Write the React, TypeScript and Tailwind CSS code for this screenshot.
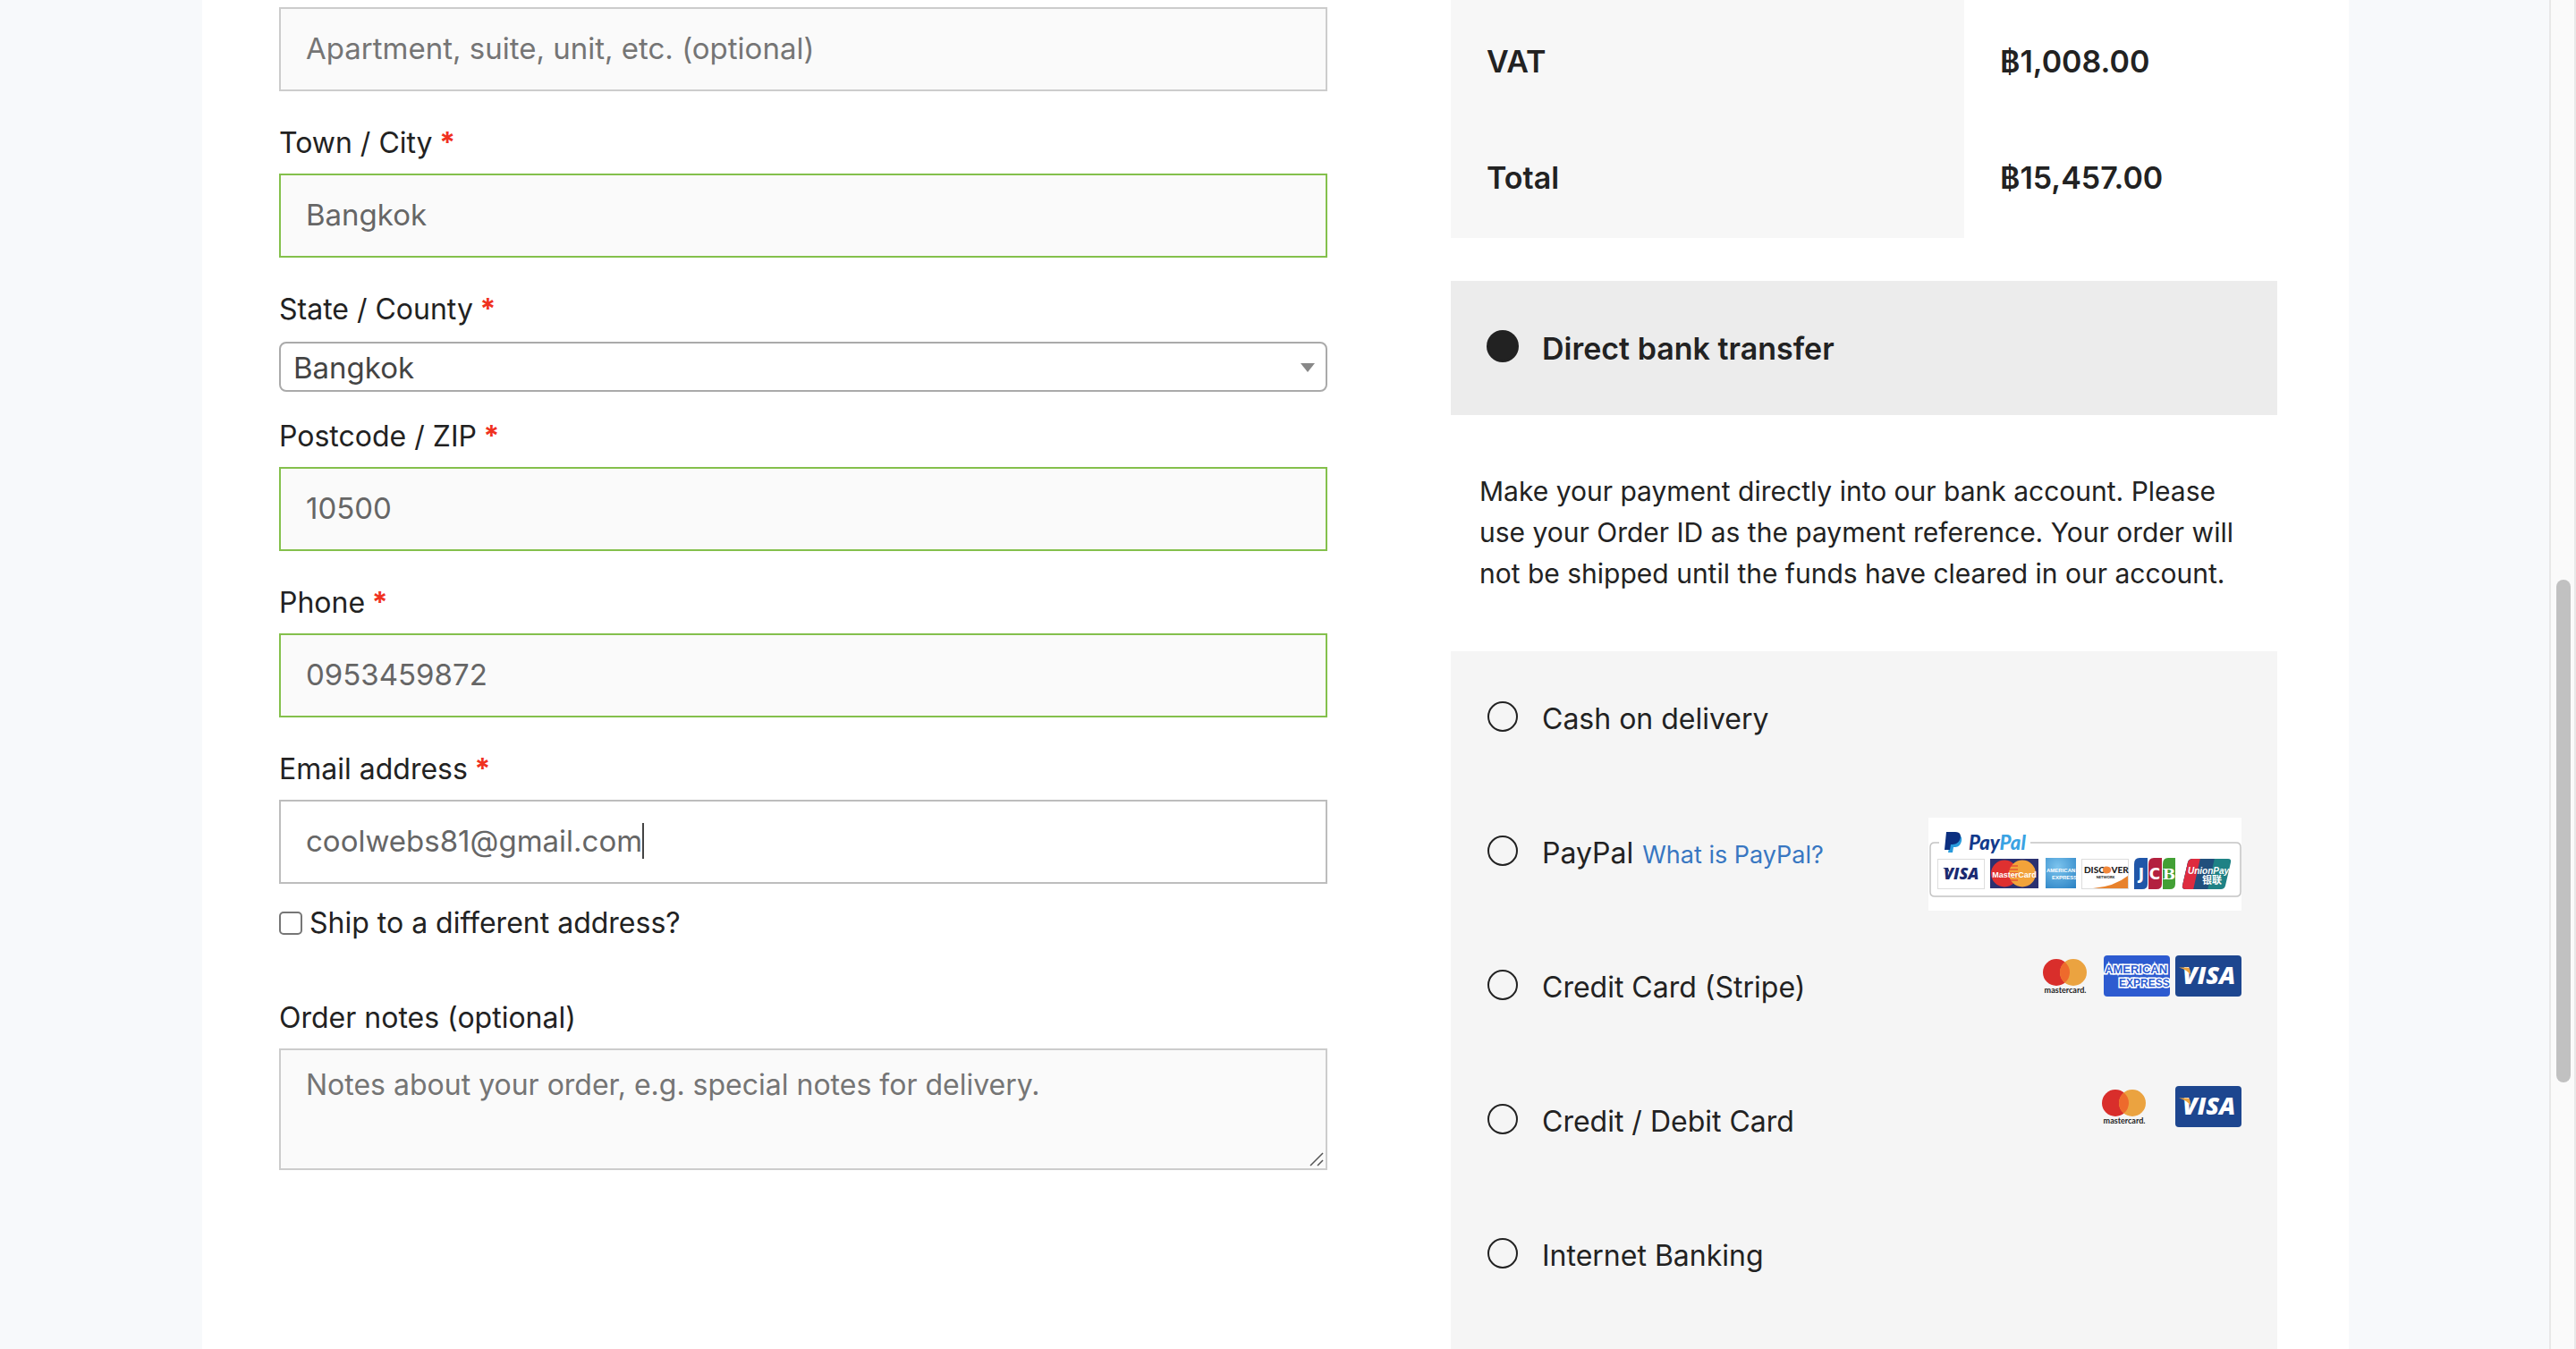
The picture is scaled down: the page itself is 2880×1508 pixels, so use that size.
import { useState } from "react";
import type { ReactNode } from "react";

type FieldProps = {
  id: string;
  label: string;
  value: string;
  type?: string;
  className?: string;
  focused?: boolean;
};

function Label({ htmlFor, required, children }: { htmlFor: string; required?: boolean; children: ReactNode }) {
  return (
    <label htmlFor={htmlFor} className="block leading-[60px]">
      {children}
      {required && <span className="font-bold text-[#f0321f]"> *</span>}
    </label>
  );
}

function Field({ id, label, value, type = "text", className = "mt-7", focused }: FieldProps) {
  const [text, setText] = useState(value);
  return (
    <div className={className}>
      <Label htmlFor={id} required>
        {label}
      </Label>
      <div className="relative mt-1">
        <input
          id={id}
          type={type}
          value={text}
          onChange={(e) => setText(e.target.value)}
          className={
            focused
              ? "block h-[94px] w-full border-2 border-[#bdbdbd] bg-white px-7 pb-0.5 text-[33px] text-[#666] outline-none"
              : "block h-[94px] w-full border-2 border-[#84c04c] bg-[#fafafa] px-7 pb-0.5 text-[33px] text-[#666] outline-none"
          }
        />
        {focused && <span className="absolute top-[26px] left-[406px] h-10 w-0.5 bg-[#444]" />}
      </div>
    </div>
  );
}

function MastercardLogo() {
  return (
    <svg viewBox="0 0 74 46" className="h-[46px] w-[74px]" role="img" aria-label="Mastercard">
      <circle cx="27" cy="19" r="15" fill="#d92e2b" />
      <circle cx="46" cy="19" r="15" fill="#eba340" />
      <path d="M36.500 7.400a15 15 0 0 1 0 23.200a15 15 0 0 1 0-23.200z" fill="#ee6a2c" />
      <text x="37" y="42" textAnchor="middle" fontFamily="Lato" fontWeight="700" fontSize="9" fill="#222">
        mastercard.
      </text>
    </svg>
  );
}

function AmexLogo() {
  return (
    <svg viewBox="0 0 74 46" className="h-[46px] w-[74px] rounded" role="img" aria-label="American Express">
      <rect width="74" height="46" fill="#2d5bd0" />
      <g
        fontFamily="Liberation Sans"
        fontWeight="700"
        fill="#2d5bd0"
        stroke="#fff"
        strokeWidth="3"
        paintOrder="stroke"
      >
        <text x="1" y="20" fontSize="13">AMERICAN</text>
        <text x="17" y="35" fontSize="12">EXPRESS</text>
      </g>
    </svg>
  );
}

function VisaLogo() {
  return (
    <svg viewBox="0 0 74 46" className="h-[46px] w-[74px] rounded" role="img" aria-label="Visa">
      <rect width="74" height="46" fill="#1d468f" />
      <text x="8" y="32" fontFamily="Open Sans" fontWeight="800" fontStyle="italic" fontSize="27" fill="#fff">
        VISA
      </text>
      <path d="M4 13.500h9q3 0 3.500 3l1 6q-4-6.500-13.500-9z" fill="#eba340" />
    </svg>
  );
}

function PayPalAcceptance() {
  return (
    <svg viewBox="0 0 350 104" className="h-[104px] w-[350px]" role="img" aria-label="PayPal acceptance mark">
      <defs>
        <radialGradient id="amex" cx="0.4" cy="0.3" r="0.9">
          <stop offset="0" stopColor="#7cc4ee" />
          <stop offset="1" stopColor="#2a82c4" />
        </radialGradient>
        <clipPath id="union">
          <path d="M296 46h39q4 0 3 4l-6 26q-1 4-5 4h-39q-5 0-4-4l6-26q1-4 6-4z" />
        </clipPath>
      </defs>
      <rect width="350" height="104" fill="#fff" />
      <path
        d="M12 28H7q-5 0-5 5v50q0 5 5 5h337q5 0 5-5V33q0-5-5-5H114"
        fill="none"
        stroke="#c4c4c4"
        strokeWidth="1.500"
      />
      <path d="M26 19h7c5 1 5 6 3 10c-2 4-5 4-8 4l-1 6h-5z" fill="#2a9bdc" />
      <path d="M20 16h10c6 0 7 4 5 9c-2 4-5 5-10 5l-1 6h-6z" fill="#0c2f80" />
      <text x="45" y="36" fontFamily="Lato" fontWeight="900" fontStyle="italic" fontSize="22" fill="#123a8c">
        Pay<tspan fill="#3aa3e3">Pal</tspan>
      </text>

      <rect x="10.500" y="46.500" width="52" height="33" fill="#fff" stroke="#ddd" />
      <text x="17" y="69" fontFamily="Open Sans" fontWeight="800" fontStyle="italic" fontSize="18" fill="#1b2a70">
        VISA
      </text>
      <path d="M16 56h6l2 6q-3-4-8-6z" fill="#1b2a70" />

      <rect x="69" y="46" width="54" height="33" fill="#2b3170" />
      <circle cx="85" cy="62.500" r="15" fill="#df3030" />
      <circle cx="105" cy="62.500" r="15" fill="#f2a33a" />
      <path d="M90 54h10M90 58h10M90 62h10M90 66h10M90 70h10" stroke="#df3030" />
      <text x="96" y="67" textAnchor="middle" fontFamily="Liberation Sans" fontWeight="700" fontSize="9" fill="#fff">
        MasterCard
      </text>

      <rect x="131" y="45" width="34" height="34" fill="url(#amex)" />
      <g fontFamily="Liberation Sans" fontWeight="700" fill="#fff">
        <text x="132" y="61" fontSize="6">AMERICAN</text>
        <text x="138" y="69" fontSize="6">EXPRESS</text>
      </g>

      <rect x="171.500" y="46.500" width="52" height="33" fill="#fff" stroke="#ddd" />
      <path d="M184 79q24-2 39-14v14z" fill="#e8822c" />
      <text x="174" y="62" fontFamily="Lato" fontWeight="900" fontSize="10" fill="#222">
        DISC<tspan fill="#f0883a">O</tspan>VER
      </text>
      <circle cx="199" cy="58.500" r="4" fill="#f0883a" />
      <text x="198" y="68" textAnchor="middle" fontFamily="Lato" fontWeight="900" fontSize="4" fill="#222">
        NETWORK
      </text>

      <path d="M236 45h9v29q0 6-6 6h-9V52q0-7 6-7z" fill="#2056a8" />
      <path d="M252 45h9v29q0 6-6 6h-9V52q0-7 6-7z" fill="#b3213f" />
      <path d="M268 45h8v29q0 6-6 6h-8V52q0-7 6-7z" fill="#43a035" />
      <g fontFamily="DejaVu Sans" fontWeight="700" fontSize="17" fill="#fff" textAnchor="middle">
        <text x="238" y="69">J</text>
        <text x="253" y="69">C</text>
        <text x="269" y="69" fontFamily="DejaVu Serif">B</text>
      </g>

      <g clipPath="url(#union)">
        <rect x="283" y="45" width="60" height="36" fill="#1f8285" />
        <path d="M283 45h37l-8 36h-29z" fill="#214f7c" />
        <path d="M283 45h21l-8 36h-13z" fill="#de2b3e" />
      </g>
      <g fill="#fff" fontWeight="700">
        <text x="290" y="63" fontFamily="Liberation Sans" fontStyle="italic" fontSize="10">UnionPay</text>
        <text x="306" y="74" fontFamily="Noto Sans CJK SC" fontSize="11">银联</text>
      </g>
    </svg>
  );
}

type PaymentProps = {
  id: string;
  label: string;
  selected: string;
  onSelect: (id: string) => void;
  link?: string;
  children?: ReactNode;
};

function PaymentOption({ id, label, selected, onSelect, link, children }: PaymentProps) {
  const checked = selected === id;
  return (
    <div className="flex h-[150px] items-start justify-between pr-10 pl-10">
      <div className="flex h-full items-center">
        <input
          id={id}
          type="radio"
          name="payment"
          checked={checked}
          onChange={() => onSelect(id)}
          className="mx-px mb-1 size-[34px] shrink-0 appearance-none rounded-full border-2 border-[#222] checked:bg-[#222] checked:ring-1 checked:ring-[#222]"
        />
        <label htmlFor={id} className={checked ? "pt-0.5 pl-[26px] text-[34px] font-semibold" : "pt-0.5 pl-[26px]"}>
          {label}
        </label>
        {link && (
          <a href="#paypal" className="ml-2.5 pt-1.5 text-[27px] text-[#3877c2]">
            {link}
          </a>
        )}
      </div>
      {children}
    </div>
  );
}

export default function App() {
  const [payment, setPayment] = useState("bank");
  const [ship, setShip] = useState(false);
  const option = { selected: payment, onSelect: setPayment };

  return (
    <div className="flex min-h-screen bg-[#f7f9fb] font-['Inter',sans-serif] text-[32px] leading-[50px] text-[#222]">
      <div className="flex flex-1 pr-[224px] pl-[226px]">
        <main className="grid flex-1 grid-cols-[1172fr_924fr] gap-x-[138px] bg-white pr-20 pl-[86px]">
          <form className="pt-2">
            <input
              type="text"
              aria-label="Apartment, suite, unit, etc."
              placeholder="Apartment, suite, unit, etc. (optional)"
              className="block h-[94px] w-full border-2 border-[#ccc] bg-[#fafafa] px-7 pb-0.5 text-[33px] outline-none placeholder:text-[#757575]"
            />
            <Field id="city" label="Town / City" value="Bangkok" />
            <div className="mt-7">
              <Label htmlFor="state" required>
                State / County
              </Label>
              <div className="relative mt-1.5">
                <select
                  id="state"
                  className="block h-14 w-full appearance-none rounded-lg border-2 border-[#aaa] bg-white px-3.5 pt-0.5 text-[33px] leading-[50px] text-[#444] outline-none"
                >
                  <option>Bangkok</option>
                </select>
                <svg viewBox="0 0 16 10" className="pointer-events-none absolute top-6 right-3.5 h-2.5 w-4">
                  <path d="M0 0h16L8 10z" fill="#888" />
                </svg>
              </div>
            </div>
            <Field id="postcode" label="Postcode / ZIP" value="10500" className="mt-5" />
            <Field id="phone" label="Phone" type="tel" value="0953459872" />
            <Field id="email" label="Email address" value="coolwebs81@gmail.com" focused />
            <div className="mt-3.5 flex h-[60px] items-center gap-2">
              <input
                id="ship"
                type="checkbox"
                checked={ship}
                onChange={(e) => setShip(e.target.checked)}
                className="size-[26px] appearance-none rounded-[5px] border-2 border-[#767676] bg-white checked:bg-[#767676]"
              />
              <label htmlFor="ship">Ship to a different address?</label>
            </div>
            <div className="mt-[46px]">
              <Label htmlFor="notes">Order notes (optional)</Label>
              <div className="relative mt-1">
                <textarea
                  id="notes"
                  placeholder="Notes about your order, e.g. special notes for delivery."
                  className="block h-[136px] w-full resize-none border-2 border-[#ccc] bg-[#fafafa] px-7 py-3.5 outline-none placeholder:text-[#757575]"
                />
                <svg viewBox="0 0 16 16" className="pointer-events-none absolute right-1 bottom-1 size-4">
                  <path d="M1 15L15 1M9 15l6-6" stroke="#555" strokeWidth="1.500" />
                </svg>
              </div>
            </div>
          </form>

          <section className="flex flex-col">
            <table className="w-full text-left text-[34px] font-semibold">
              <tbody>
                <tr>
                  <th scope="row" className="w-[574px] bg-[#f7f7f7] px-10 pt-11 pb-[42px] font-semibold">
                    VAT
                  </th>
                  <td className="px-10 pt-11 pb-[42px]">฿1,008.00</td>
                </tr>
                <tr>
                  <th scope="row" className="bg-[#f7f7f7] px-10 pt-[38px] pb-[42px] font-semibold">
                    Total
                  </th>
                  <td className="px-10 pt-[38px] pb-[42px]">฿15,457.00</td>
                </tr>
              </tbody>
            </table>

            <div className="mt-12 bg-[#ececec]">
              <PaymentOption id="bank" label="Direct bank transfer" {...option} />
            </div>
            <p className="px-8 pt-[62px] pb-16 text-[30px] leading-[46px]">
              Make your payment directly into our bank account. Please use your Order ID as the payment reference. Your
              order will not be shipped until the funds have cleared in our account.
            </p>
            <div className="flex-1 bg-[#f5f5f5]">
              <PaymentOption id="cod" label="Cash on delivery" {...option} />
              <PaymentOption id="paypal" label="PayPal" link="What is PayPal?" {...option}>
                <div className="pt-9">
                  <PayPalAcceptance />
                </div>
              </PaymentOption>
              <PaymentOption id="stripe" label="Credit Card (Stripe)" {...option}>
                <div className="flex gap-1.5 pt-10">
                  <MastercardLogo />
                  <AmexLogo />
                  <VisaLogo />
                </div>
              </PaymentOption>
              <PaymentOption id="card" label="Credit / Debit Card" {...option}>
                <div className="flex gap-5 pt-9">
                  <MastercardLogo />
                  <VisaLogo />
                </div>
              </PaymentOption>
              <PaymentOption id="internet" label="Internet Banking" {...option} />
            </div>
          </section>
        </main>
      </div>
      <div className="w-[30px] border-x-2 border-[#e8e8e8] bg-[#fafafa] px-1 pt-[648px]">
        <div className="ml-0.5 h-[562px] w-4 rounded-full bg-[#c1c1c1]" />
      </div>
    </div>
  );
}
